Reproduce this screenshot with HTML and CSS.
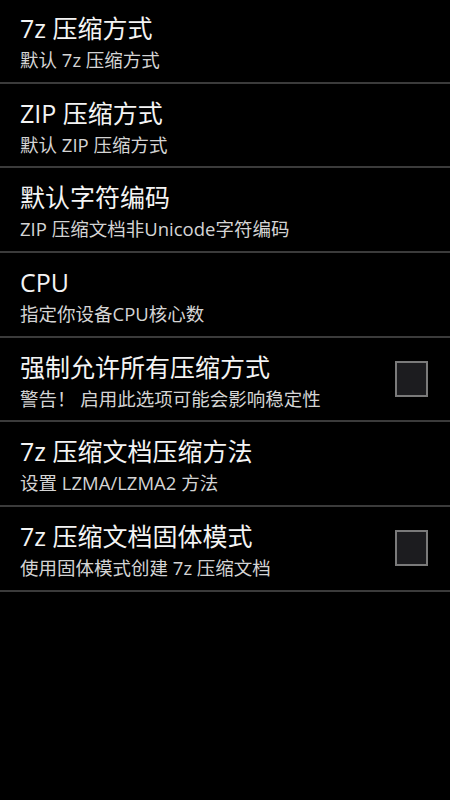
FILE: index.html
```html
<!DOCTYPE html>
<html lang="zh-CN">
<head>
    <meta charset="UTF-8">
    <meta name="viewport" content="width=device-width, initial-scale=1.0">
    <title>压缩设置</title>
    <link rel="stylesheet" href="styles.css">
</head>
<body>
    <div class="settings">
        <div class="item">
            <div class="text">
                <div class="title">7z 压缩方式</div>
                <div class="summary">默认 7z 压缩方式</div>
            </div>
        </div>
        <div class="item">
            <div class="text">
                <div class="title">ZIP 压缩方式</div>
                <div class="summary">默认 ZIP 压缩方式</div>
            </div>
        </div>
        <div class="item">
            <div class="text">
                <div class="title">默认字符编码</div>
                <div class="summary">ZIP 压缩文档非Unicode字符编码</div>
            </div>
        </div>
        <div class="item">
            <div class="text">
                <div class="title">CPU</div>
                <div class="summary">指定你设备CPU核心数</div>
            </div>
        </div>
        <div class="item">
            <div class="text">
                <div class="title">强制允许所有压缩方式</div>
                <div class="summary">警告！ 启用此选项可能会影响稳定性</div>
            </div>
            <span class="checkbox"></span>
        </div>
        <div class="item">
            <div class="text">
                <div class="title">7z 压缩文档压缩方法</div>
                <div class="summary">设置 LZMA/LZMA2 方法</div>
            </div>
        </div>
        <div class="item">
            <div class="text">
                <div class="title">7z 压缩文档固体模式</div>
                <div class="summary">使用固体模式创建 7z 压缩文档</div>
            </div>
            <span class="checkbox"></span>
        </div>
    </div>
</body>
</html>
```

FILE: styles.css
```css
html, body {
    margin: 0;
    padding: 0;
    background-color: #000;
}

body {
    font-family: "Open Sans", "Noto Sans CJK SC", sans-serif;
    color: #f2f2f2;
    width: 450px;
    height: 800px;
    overflow: hidden;
}

.settings {
    margin-top: -1px;
}

.item {
    display: flex;
    align-items: flex-start;
    height: 82.7px;
    padding: 0 22px 0 20px;
    border-bottom: 2px solid #3b3b3b;
    box-sizing: content-box;
}

.text {
    flex: 1;
    padding-top: 13px;
}

.title {
    font-size: 25px;
    line-height: 32px;
    color: #f4f4f4;
}

.summary {
    margin-top: 2px;
    font-size: 18.5px;
    line-height: 28px;
    color: #d4d4d4;
}

.checkbox {
    align-self: center;
    width: 29px;
    height: 32px;
    border: 2px solid #7a7a7a;
    background-color: #1c1c1f;
}
```
